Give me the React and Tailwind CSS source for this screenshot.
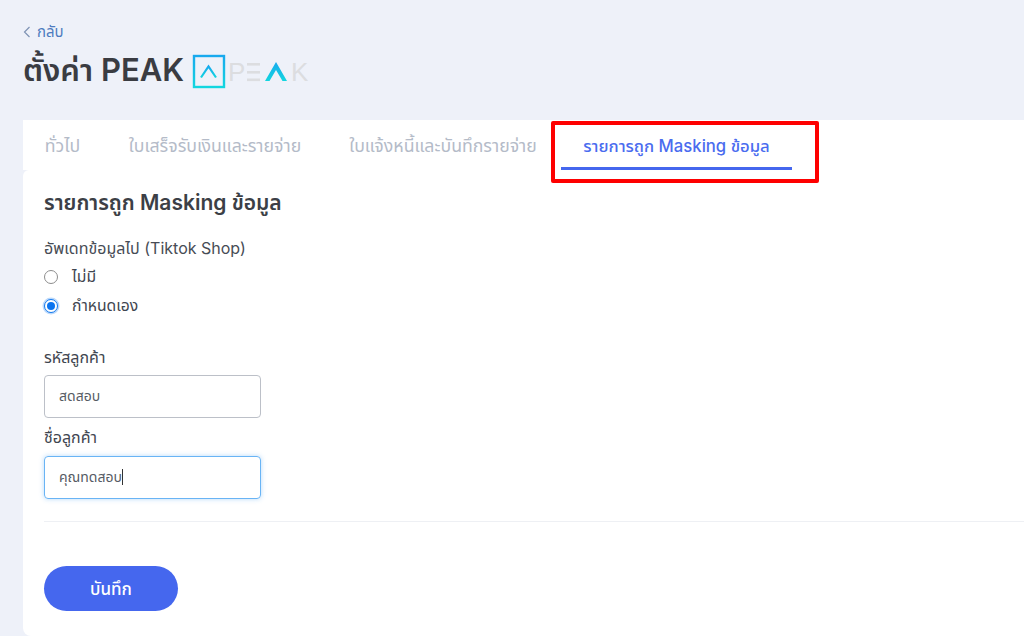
import React from "react";

const font = { fontFamily: 'Inter, "Noto Sans", "Noto Sans Thai", sans-serif' };

function Logo() {
  return (
    <svg width="118" height="38" viewBox="0 0 118 38" className="ml-[7px] mt-[4px] shrink-0">
      <defs>
        <linearGradient id="g" x1="0" y1="0" x2="0" y2="1">
          <stop offset="0" stopColor="#18a9ee" />
          <stop offset="1" stopColor="#12d6df" />
        </linearGradient>
      </defs>
      <rect x="2" y="3" width="30" height="31" fill="none" stroke="url(#g)" strokeWidth="2.4" />
      <path d="M9 24.5 L16.5 13.5 L24 24.5" fill="none" stroke="url(#g)" strokeWidth="2.2" />
      <text x="36" y="28" fontFamily="Liberation Sans, sans-serif" fontSize="26" fill="#dcdde0">P</text>
      <rect x="55" y="10" width="13" height="2.6" fill="#dcdde0" />
      <rect x="55" y="18" width="13" height="2.6" fill="#dcdde0" />
      <rect x="55" y="25.5" width="13" height="2.6" fill="#dcdde0" />
      <path d="M73 28 L84 9 L95 28 L90.5 28 L84 17 L77.5 28 Z" fill="url(#g)" />
      <text x="99" y="28" fontFamily="Liberation Sans, sans-serif" fontSize="26" fill="#dcdde0">K</text>
    </svg>
  );
}

function Tab({ children, active, className }) {
  return (
    <div className={`relative flex items-center justify-center whitespace-nowrap h-full ${active ? "text-[16.7px] text-[#4a6cef] font-medium pt-[6px]" : "text-[17.7px] text-[#b4bbc8] pt-[2px]"} ${className}`}>
      {children}
    </div>
  );
}

function Radio({ checked, label }) {
  return (
    <div className="flex items-center h-[29px]">
      <span className={`w-[14px] h-[14px] rounded-full border bg-white flex items-center justify-center ${checked ? "border-[#1279ee] ring-[1.5px] ring-[#bcd9fb]" : "border-[#8d8d8d]"}`}>
        {checked && <span className="w-[8px] h-[8px] rounded-full bg-[#0a74f0]" />}
      </span>
      <span className="ml-[14px] text-[15.7px] text-[#3f4650]">{label}</span>
    </div>
  );
}

export default function App() {
  return (
    <div className="w-[1024px] h-[636px] overflow-hidden bg-[#eef1f9] pl-[23px] flex flex-col" style={font}>
      <div className="h-[120px] shrink-0 pt-[21px]">
        <div className="flex items-center h-[22px] text-[15px] text-[#4f7cc0]">
          <svg width="8" height="12" viewBox="0 0 8 12" className="mr-[6px]" fill="none" stroke="#7f93b5" strokeWidth="1.2"><path d="M6.5 1 L1.5 6 L6.5 11" /></svg>
          กลับ
        </div>
        <div className="flex items-center mt-[2px] h-[50px]">
          <h1 className="w-[162px] text-[31px] leading-[40px] font-semibold text-[#3a3c42] whitespace-nowrap">ตั้งค่า PEAK</h1>
          <Logo />
        </div>
      </div>

      <div className="bg-white h-[50px] shrink-0 flex items-stretch relative">
        <Tab className="ml-[22px] w-[35px]">ทั่วไป</Tab>
        <Tab className="ml-[48px] w-[174px]">ใบเสร็จรับเงินและรายจ่าย</Tab>
        <Tab className="ml-[48px] w-[186px]">ใบแจ้งหนี้และบันทึกรายจ่าย</Tab>
        <Tab active className="ml-[25px] w-[231px] border-b-[3px] border-[#4567ee]">รายการถูก Masking ข้อมูล</Tab>
        <div className="absolute left-[528px] top-[1px] w-[268px] h-[62px] border-[4px] border-[#fe0000] rounded-[2px]" />
      </div>

      <div className="bg-white flex-1 rounded-tl-[6px] rounded-bl-[8px] pl-[21px] pt-[18px]">
        <h2 className="text-[21px] leading-[30px] font-semibold text-[#3c3f46]">รายการถูก Masking ข้อมูล</h2>
        <div className="mt-[19px] text-[16px] leading-[22px] text-[#474c55]">อัพเดทข้อมูลไป (Tiktok Shop)</div>
        <div className="mt-[3px]">
          <Radio label="ไม่มี" />
          <Radio checked label="กำหนดเอง" />
        </div>
        <div className="mt-[26px] text-[16px] leading-[22px] text-[#3f4650]">รหัสลูกค้า</div>
        <div className="mt-[7px] w-[217px] h-[43px] rounded-[4px] border border-[#bcc0c8] flex items-center pl-[14px] pb-[2px] text-[14px] text-[#565b64]">สดสอบ</div>
        <div className="mt-[8px] text-[16px] leading-[22px] text-[#3f4650]">ชื่อลูกค้า</div>
        <div className="mt-[8px] w-[217px] h-[43px] rounded-[4px] border border-[#69b4f5] shadow-[0_0_5px_rgba(90,170,245,0.45)] flex items-center pl-[14px] pb-[2px] text-[14px] text-[#565b64]">
          คุณทดสอบ<span className="inline-block w-px h-[16px] bg-[#333]" />
        </div>
        <div className="mt-[22px] h-px bg-[#eef0f4]" />
        <button className="mt-[44px] w-[134px] h-[45px] rounded-full bg-[#4567ee] text-white text-[17px] font-medium pt-[2px]">บันทึก</button>
      </div>
    </div>
  );
}
